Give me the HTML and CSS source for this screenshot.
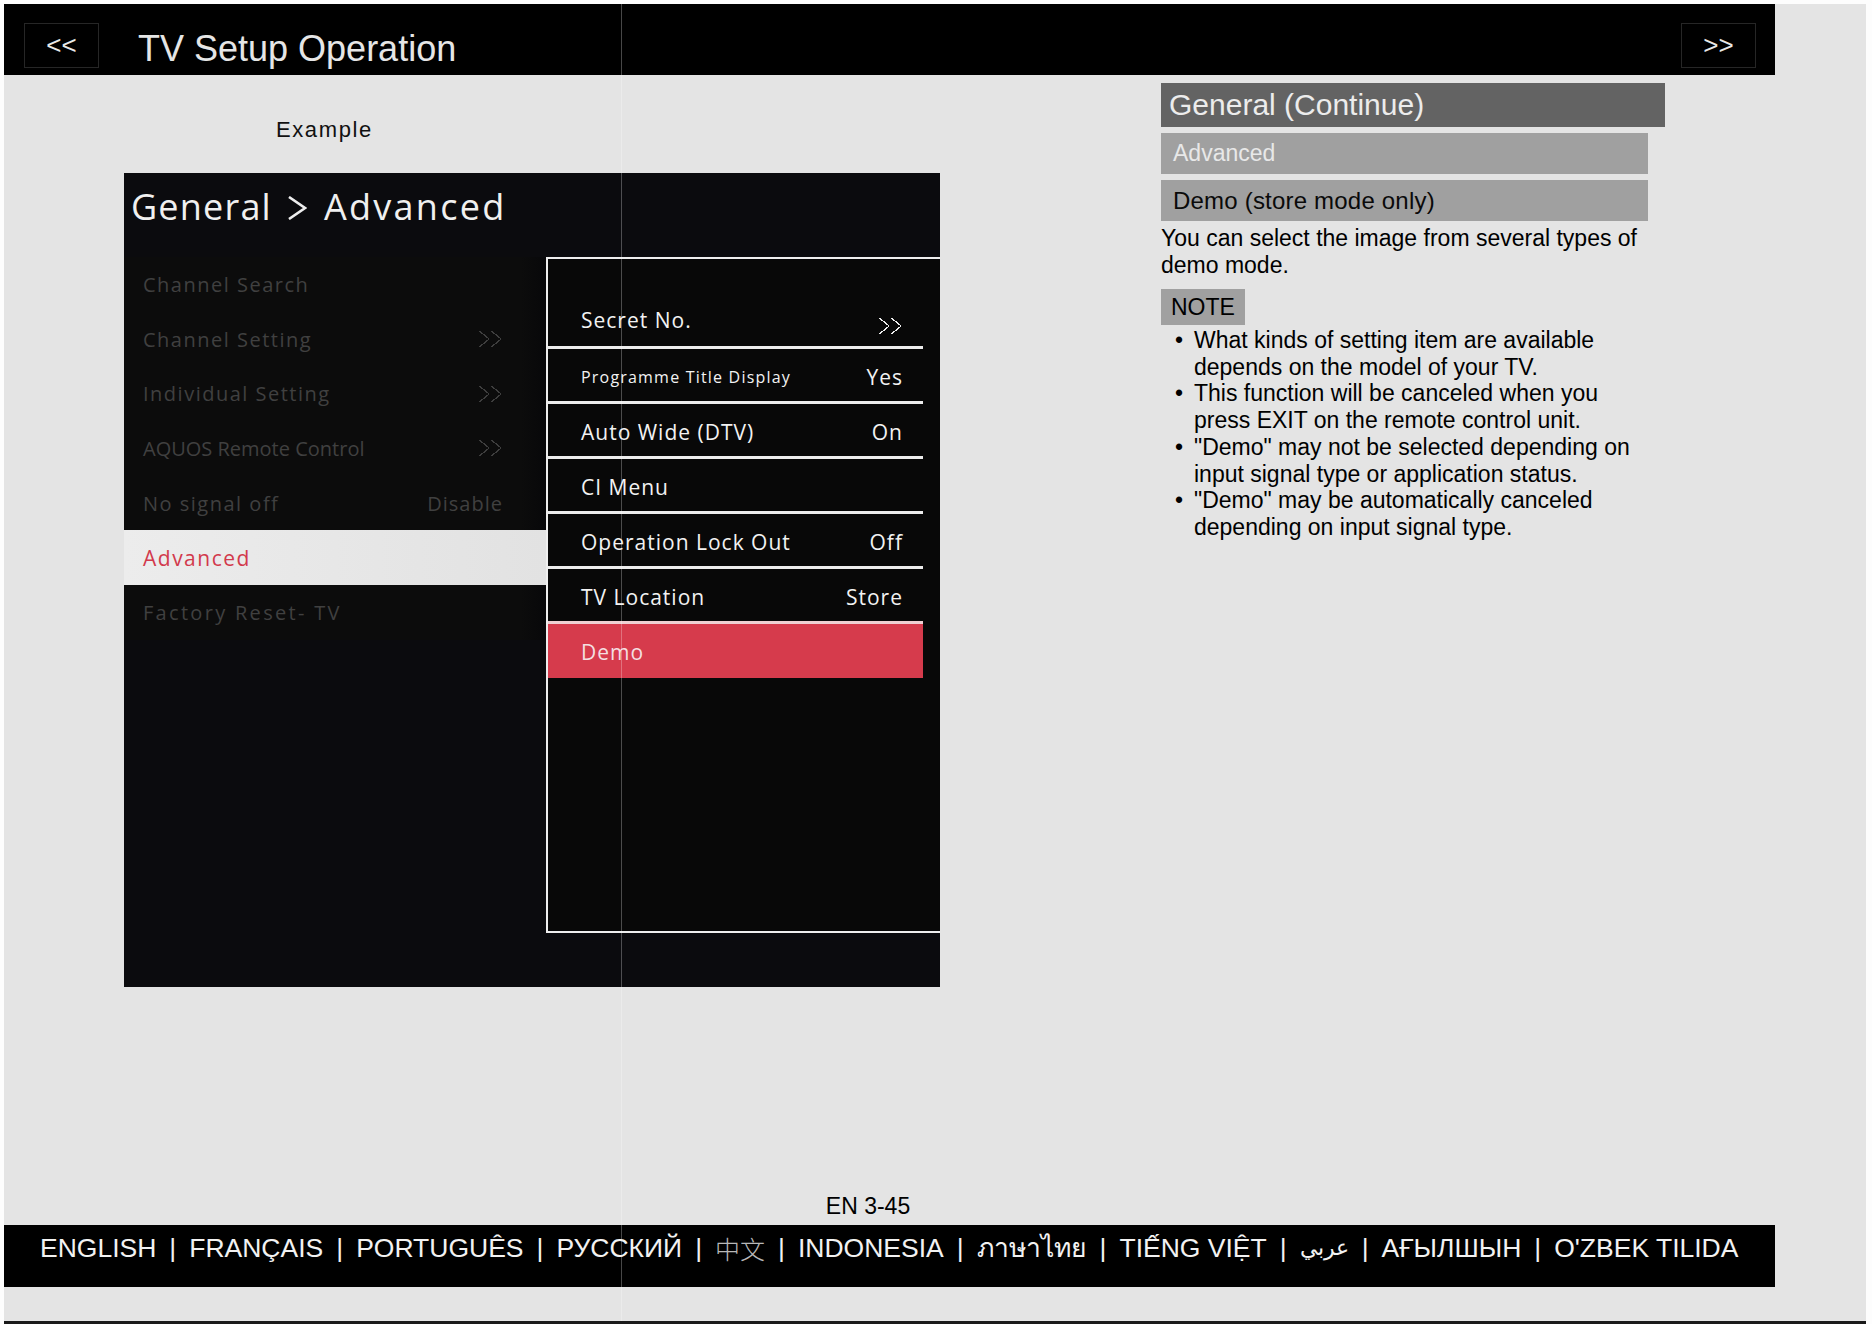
FILE: index.html
```html
<!DOCTYPE html>
<html lang="en">
<head>
    <meta charset="UTF-8">
    <title>TV Setup Operation - General (Continue)</title>
    <link rel="stylesheet" href="styles.css">
</head>
<body>

    <div class="page">

        <header class="topbar">
            <a class="nav-btn">&lt;&lt;</a>
            <h1 class="doc-title">TV Setup Operation</h1>
            <a class="nav-btn next">&gt;&gt;</a>
        </header>

        <main class="content">

            <section class="example">
                <p class="caption">Example</p>

                <div class="tv">
                    <div class="tv-title">
                        <span class="crumb-root">General</span>
                        <svg class="crumb" width="20" height="24" viewBox="0 0 20 24"><polyline points="2,1 18,12 2,23" fill="none" stroke="#eee" stroke-width="2.6"/></svg>
                        <span>Advanced</span>
                    </div>

                    <div class="tv-body">
                        <!-- left menu: only "Advanced" is active -->
                        <ul class="menu">
                            <li>Channel Search</li>
                            <li>Channel Setting <span class="dbl dim"></span></li>
                            <li>Individual Setting <span class="dbl dim"></span></li>
                            <li class="caps">AQUOS Remote Control <span class="dbl dim"></span></li>
                            <li>No signal off <span class="val">Disable</span></li>
                            <li class="active">Advanced</li>
                            <li class="wide">Factory Reset- TV</li>
                        </ul>

                        <div class="sub">
                            <div class="sub-row first">Secret No. <span class="dbl"></span></div>
                            <div class="sub-row small">Programme Title Display <span class="val">Yes</span></div>
                            <div class="sub-row">Auto Wide (DTV) <span class="val">On</span></div>
                            <div class="sub-row">CI Menu</div>
                            <div class="sub-row">Operation Lock Out <span class="val">Off</span></div>
                            <div class="sub-row last">TV Location <span class="val">Store</span></div>
                            <div class="sub-row selected">Demo</div>
                        </div>
                    </div>
                </div>
            </section>

            <section class="notes">
                <h2 class="sec-head">General (Continue)</h2>
                <h3 class="sub-head">Advanced</h3>
                <h4 class="item-head">Demo (store mode only)</h4>
                <p class="desc">You can select the image from several types of demo mode.</p>

                <div class="note-tag">NOTE</div>
                <ul class="note-list">
                    <li>What kinds of setting item are available depends on the model of your TV.</li>
                    <li>This function will be canceled when you press EXIT on the remote control unit.</li>
                    <li>"Demo" may not be selected depending on input signal type or application status.</li>
                    <li>"Demo" may be automatically canceled depending on input signal type.</li>
                </ul>
            </section>

        </main>

        <div class="page-no">EN 3-45</div>

        <footer class="langs">
            <span>ENGLISH</span><span class="sep">|</span>
            <span>FRANÇAIS</span><span class="sep">|</span>
            <span>PORTUGUÊS</span><span class="sep">|</span>
            <span>РУССКИЙ</span><span class="sep">|</span>
            <span class="cjk">中文</span><span class="sep">|</span>
            <span>INDONESIA</span><span class="sep">|</span>
            <span>ภาษาไทย</span><span class="sep">|</span>
            <span>TIẾNG VIỆT</span><span class="sep">|</span>
            <span class="arabic">عربي</span><span class="sep">|</span>
            <span>АҒЫЛШЫН</span><span class="sep">|</span>
            <span>O'ZBEK TILIDA</span>
        </footer>

        <div class="seam"></div>
    </div>

</body>
</html>
```

FILE: styles.css
```css
* {
    margin: 0;
    padding: 0;
    box-sizing: border-box;
    list-style: none;
}

body {
    background-color: #fdfdfd;
    font-family: "Liberation Sans", Arial, sans-serif;
}

.page {
    position: relative;
    width: 1862px;
    height: 1320px;
    margin: 4px 0 0 4px;
    background-color: #e4e4e4;
    border-bottom: 3px solid #1a1a1a;
}

/* ---------- header bar ---------- */

.topbar {
    width: 1771px;
    height: 71px;
    background-color: #000;
    display: flex;
    align-items: flex-start;
}

.nav-btn {
    width: 75px;
    height: 45px;
    margin: 19px 0 0 20px;
    border: 1px solid #262626;
    color: #e8e8e8;
    font-size: 26px;
    display: flex;
    align-items: center;
    justify-content: center;
}

.nav-btn.next {
    margin: 19px 19px 0 auto;
}

.doc-title {
    margin: 25px 0 0 39px;
    font-size: 36px;
    line-height: 40px;
    font-weight: normal;
    color: #e6e6e6;
}

/* ---------- main area ---------- */

.content {
    display: flex;
    height: 1116px;
    padding-left: 120px;
}

.example {
    width: 816px;
}

.caption {
    margin: 42px 0 30px 152px;
    font-size: 22px;
    line-height: 26px;
    letter-spacing: 1.6px;
    color: #111;
}

/* ---------- TV menu screenshot ---------- */

.tv {
    width: 816px;
    height: 814px;
    background-color: #0b0b0e;
    font-family: "Open Sans", Lato, sans-serif;
}

.tv-title {
    height: 84px;
    padding: 12px 0 0 7px;
    font-size: 36px;
    line-height: 43px;
    letter-spacing: 2.3px;
    color: #f0f0f0;
    display: flex;
    align-items: flex-start;
}

.crumb-root {
    letter-spacing: 1.2px;
}

.crumb {
    margin: 11px 17px 0 15px;
}

.tv-body {
    display: flex;
    align-items: flex-start;
}

.menu {
    width: 422px;
    background: linear-gradient(to right, #0c0c0c 94%, #08080a);
}

.menu li {
    height: 54.7px;
    padding: 0 43px 0 19px;
    display: flex;
    align-items: center;
    justify-content: space-between;
    font-size: 20px;
    letter-spacing: 1.5px;
    color: #404040;
}

.menu li.caps {
    letter-spacing: 0;
}

.menu li.wide {
    letter-spacing: 2.3px;
}

.menu .val {
    letter-spacing: 1px;
}

.menu li.active {
    background: linear-gradient(to right, #ececec, #e2e2e2);
    color: #d2394c;
    font-size: 21px;
}

.sub {
    flex: 1;
    height: 676px;
    background-color: #080808;
    border-top: 2px solid #eee;
    border-left: 2px solid #eee;
    border-bottom: 2px solid #eee;
}

.sub-row {
    height: 55px;
    margin-right: 17px;
    padding: 4px 20px 0 33px;
    border-bottom: 3px solid #ececec;
    display: flex;
    align-items: center;
    justify-content: space-between;
    font-size: 21px;
    letter-spacing: 1px;
    color: #f2f2f2;
}

.sub-row.first {
    height: 90px;
    align-items: flex-end;
    padding-bottom: 12px;
}

.sub-row.small {
    font-size: 16px;
    letter-spacing: 1.2px;
}

.sub-row.small .val {
    font-size: 21px;
    letter-spacing: 1px;
}

.sub-row.last {
    border-bottom-color: #efcfd2;
}

.sub-row.selected {
    height: 54px;
    border-bottom: none;
    background-color: #d63b4c;
    color: #f4dfe1;
    padding-top: 2px;
}

/* double chevron used for "more" items */
.dbl {
    width: 24px;
    height: 16px;
    background:
        linear-gradient(to top right, transparent 46%, #eee 46%, #eee 56%, transparent 56%) 0 0 / 10px 8px no-repeat,
        linear-gradient(to bottom right, transparent 46%, #eee 46%, #eee 56%, transparent 56%) 0 8px / 10px 8px no-repeat,
        linear-gradient(to top right, transparent 46%, #eee 46%, #eee 56%, transparent 56%) 12px 0 / 10px 8px no-repeat,
        linear-gradient(to bottom right, transparent 46%, #eee 46%, #eee 56%, transparent 56%) 12px 8px / 10px 8px no-repeat;
}

.dbl.dim {
    opacity: 0.22;
}

/* ---------- right column ---------- */

.notes {
    width: 504px;
    margin-left: 221px;
    padding-top: 8px;
    color: #000;
}

.sec-head {
    height: 44px;
    padding-left: 8px;
    background-color: #636363;
    color: #ececec;
    font-size: 30px;
    line-height: 43px;
    font-weight: normal;
}

.sub-head,
.item-head {
    width: 487px;
    height: 41px;
    margin-top: 6px;
    padding-left: 12px;
    background-color: #a0a0a0;
    font-size: 23px;
    line-height: 41px;
    font-weight: normal;
}

.sub-head {
    color: #e8e8e8;
}

.item-head {
    color: #0a0a0a;
    font-size: 24px;
    letter-spacing: 0.2px;
}

.desc {
    width: 500px;
    margin-top: 4px;
    font-size: 23px;
    line-height: 27px;
}

.note-tag {
    display: inline-block;
    margin-top: 10px;
    height: 36px;
    padding: 0 10px;
    background-color: #a0a0a0;
    font-size: 23px;
    line-height: 36px;
}

.note-list {
    margin-top: 2px;
    padding-left: 33px;
    font-size: 23px;
    line-height: 26.7px;
    width: 490px;
}

.note-list li {
    position: relative;
}

.note-list li::before {
    content: "\2022";
    position: absolute;
    left: -19px;
}

/* ---------- footer ---------- */

.page-no {
    width: 1771px;
    padding-right: 43px;
    text-align: center;
    font-size: 23px;
    line-height: 30px;
    color: #000;
}

.langs {
    width: 1771px;
    height: 62px;
    margin-top: 4px;
    padding-left: 36px;
    background-color: #000;
    color: #f2f2f2;
    font-size: 26.5px;
    line-height: 46px;
    white-space: nowrap;
    display: flex;
    gap: 13px;
}

.cjk {
    font-family: "Noto Sans CJK SC", sans-serif;
    font-size: 25px;
    font-weight: 300;
    color: #b8b8b8;
}

.arabic {
    font-size: 22px;
}

/* faint vertical seam running down the page */
.seam {
    position: absolute;
    top: 0;
    bottom: 0;
    left: 617px;
    width: 1px;
    background-color: rgba(255, 255, 255, 0.28);
}
```
